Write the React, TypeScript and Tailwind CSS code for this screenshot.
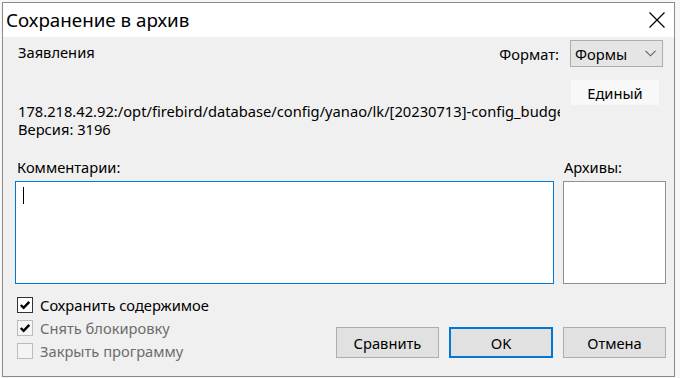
import React from "react";

const font = { fontFamily: '"Noto Sans", "Open Sans", sans-serif' };

function Check({ checked, disabled, label }: { checked: boolean; disabled?: boolean; label: string }) {
  return (
    <div className="flex items-center h-[23px]">
      <div
        className={
          "w-[16px] h-[16px] border flex items-center justify-center " +
          (disabled ? "border-[#bcbcbc] bg-[#f4f4f4]" : "border-[#333333] bg-white")
        }
      >
        {checked && (
          <svg width="12" height="12" viewBox="0 0 12 12">
            <path d="M1.8 6 L4.6 8.8 L10.3 2.8" fill="none" stroke="#000" strokeWidth="2.4" />
          </svg>
        )}
      </div>
      <span className={"ml-[7px] text-[14.7px] leading-[18px] " + (disabled ? "text-[#6d6d6d]" : "text-black")}>
        {label}
      </span>
    </div>
  );
}

export default function App() {
  return (
    <div className="w-[680px] h-[378px] bg-[#f7f7f7] pl-[2px] pt-[2px]" style={font}>
      <div className="w-[673px] h-[375px] border border-[#8a8a8a] flex flex-col bg-[#f0f0f0]">
        <div className="h-[34px] bg-white flex items-center justify-between pl-[3px] pr-[9px]">
          <span className="text-[18.8px] text-black">Сохранение в архив</span>
          <svg width="16" height="16" viewBox="0 0 16 16">
            <path d="M0.5 0.5 L15.5 15.5 M15.5 0.5 L0.5 15.5" stroke="#000" strokeWidth="1.2" />
          </svg>
        </div>
        <div className="flex-1 flex flex-col pl-[12px] text-[14.7px] leading-[18px] text-black">
          <div className="flex items-start justify-between h-[30px]">
            <span className="mt-[6px] ml-[3px]">Заявления</span>
            <div className="flex items-center mt-[3px] mr-[11px]">
              <span>Формат:</span>
              <div className="ml-[11px] w-[93px] h-[27px] border border-[#adadad] bg-[#e5e5e5] flex items-center justify-between pl-[4px] pr-[6px]">
                <span>Формы</span>
                <svg width="11" height="7" viewBox="0 0 11 7">
                  <path d="M0.5 0.8 L5.5 5.8 L10.5 0.8" fill="none" stroke="#606060" strokeWidth="1.1" />
                </svg>
              </div>
            </div>
          </div>
          <div className="flex items-start">
            <div className="mt-[35px] ml-[3px] w-[542px] overflow-hidden whitespace-nowrap">
              <div>178.218.42.92:/opt/firebird/database/config/yanao/lk/[20230713]-config_budget.fdb</div>
              <div>Версия: 3196</div>
            </div>
            <div className="mt-[13px] ml-[11px] w-[88px] h-[25px] bg-[#f8f8f8] flex items-center justify-center">
              Единый
            </div>
          </div>
          <div className="grid grid-cols-[539px_103px] gap-x-[9px] mt-[20px]">
            <span className="pl-[2px] h-[23px]">Комментарии:</span>
            <span className="pl-[1px] h-[23px]">Архивы:</span>
            <div className="h-[103px] border border-[#0078d7] bg-white relative">
              <div className="absolute left-[7px] top-[5px] w-[1px] h-[17px] bg-black" />
            </div>
            <div className="h-[103px] border border-[#8f8f8f] bg-white" />
          </div>
          <div className="flex justify-between">
            <div className="flex flex-col mt-[9px] ml-[2px]">
              <Check checked label="Сохранить содержимое" />
              <Check checked disabled label="Снять блокировку" />
              <Check checked={false} disabled label="Закрыть программу" />
            </div>
            <div className="flex gap-[10px] mt-[43px] mr-[8px]">
              <div className="w-[103px] h-[31px] border border-[#adadad] bg-[#e1e1e1] flex items-center justify-center">
                Сравнить
              </div>
              <div className="w-[104px] h-[31px] border-2 border-[#0078d7] bg-[#e1e1e1] flex items-center justify-center">
                OK
              </div>
              <div className="w-[103px] h-[31px] border border-[#adadad] bg-[#e1e1e1] flex items-center justify-center">
                Отмена
              </div>
            </div>
          </div>
        </div>
      </div>
    </div>
  );
}
